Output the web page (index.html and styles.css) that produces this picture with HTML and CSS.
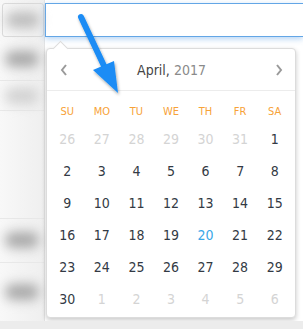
FILE: index.html
```html
<!DOCTYPE html>
<html lang="en">
<head>
    <meta charset="UTF-8">
    <title>Date Picker</title>
    <link rel="stylesheet" href="styles.css">
</head>
<body>
    <div class="page">
        <div class="side">
            <div class="side-btn"><span class="blob"></span></div>
            <div class="side-row"><span class="blob dark"></span></div>
            <div class="side-row short"><span class="blob light"></span></div>
            <div class="side-row tall"></div>
            <div class="side-row"><span class="blob dark"></span></div>
            <div class="side-row last"><span class="blob dark"></span></div>
        </div>
        <div class="main">
            <div class="field"></div>
            <div class="picker">
                <div class="picker-head">
                    <svg class="nav" width="8" height="12" viewBox="0 0 8 12"><polyline points="6,1 2,6 6,11" fill="none" stroke="#9a9a9a" stroke-width="2"/></svg>
                    <span class="title">April, <span class="year">2017</span></span>
                    <svg class="nav" width="8" height="12" viewBox="0 0 8 12"><polyline points="2,1 6,6 2,11" fill="none" stroke="#9a9a9a" stroke-width="2"/></svg>
                </div>
                <div class="days">
                    <div class="dow">SU</div><div class="dow">MO</div><div class="dow">TU</div><div class="dow">WE</div><div class="dow">TH</div><div class="dow">FR</div><div class="dow">SA</div>

                    <div class="day muted">26</div><div class="day muted">27</div><div class="day muted">28</div><div class="day muted">29</div><div class="day muted">30</div><div class="day muted">31</div><div class="day">1</div>
                    <div class="day">2</div><div class="day">3</div><div class="day">4</div><div class="day">5</div><div class="day">6</div><div class="day">7</div><div class="day">8</div>
                    <div class="day">9</div><div class="day">10</div><div class="day">11</div><div class="day">12</div><div class="day">13</div><div class="day">14</div><div class="day">15</div>
                    <div class="day">16</div><div class="day">17</div><div class="day">18</div><div class="day">19</div><div class="day today">20</div><div class="day">21</div><div class="day">22</div>
                    <div class="day">23</div><div class="day">24</div><div class="day">25</div><div class="day">26</div><div class="day">27</div><div class="day">28</div><div class="day">29</div>
                    <div class="day">30</div><div class="day muted">1</div><div class="day muted">2</div><div class="day muted">3</div><div class="day muted">4</div><div class="day muted">5</div><div class="day muted">6</div>
                </div>
            </div>
        </div>
    </div>
    <!-- annotation arrow drawn over the screenshot -->
    <svg class="pointer" width="303" height="329" viewBox="0 0 303 329">
        <defs>
            <filter id="shade" x="-20%" y="-20%" width="140%" height="140%">
                <feDropShadow dx="1" dy="2" stdDeviation="1.5" flood-color="#000" flood-opacity="0.35"/>
            </filter>
        </defs>
        <g filter="url(#shade)" fill="#1a8cf5">
            <line x1="81" y1="17" x2="105" y2="68" stroke="#1a8cf5" stroke-width="6" stroke-linecap="round"/>
            <polygon points="93,70 114,61 118,93"/>
        </g>
    </svg>
</body>
</html>
```

FILE: styles.css
```css
/* Global Styles */
body {
    margin: 0;
    font-family: 'DejaVu Sans Condensed', 'DejaVu Sans', sans-serif;
    background: #fff;
    color: #333;
}
.page {
    display: flex;
    width: 303px;
    height: 329px;
    overflow: hidden;
    border-bottom: 8px solid #ececec;
    box-sizing: border-box;
}
.side {
    width: 44px;
    display: flex;
    flex-direction: column;
    background: linear-gradient(to right, #f8f8f8, #efefef);
    border-right: 1px solid #e4e4e4;
}
.side-btn {
    height: 33px;
    margin: 3px 0 0 2px;
    border: 1px solid #dadada;
    border-radius: 3px;
    display: flex;
    align-items: center;
    justify-content: center;
}
.side-row {
    height: 45px;
    display: flex;
    align-items: center;
    justify-content: center;
    border-bottom: 1px solid #e8e8e8;
}
.side-row.short {
    height: 30px;
}
.side-row.tall {
    height: 110px;
}
.side-row.last {
    height: 60px;
    border-bottom: none;
}
.blob {
    width: 34px;
    height: 16px;
    border-radius: 8px;
    background: #bdbdbd;
    filter: blur(6px);
}
.blob.dark {
    background: #a9a9a9;
}
.blob.light {
    background: #d2d2d2;
}
.main {
    flex: 1;
    padding-top: 3px;
}
.field {
    height: 32px;
    border: 1px solid #63a6e6;
    border-right: none;
    background: #fff;
    box-shadow: 0 2px 6px rgba(90, 160, 230, 0.45);
}
.picker {
    position: relative;
    width: 250px;
    margin: 11px 0 0 1px;
    box-sizing: border-box;
    border: 1px solid #dcdcdc;
    border-radius: 4px;
    background: #fff;
    box-shadow: 0 2px 5px rgba(0, 0, 0, 0.22);
    padding: 0 3px 2px;
}
.picker::before {
    content: '';
    position: absolute;
    left: 8px;
    top: -6px;
    width: 10px;
    height: 10px;
    background: #fff;
    border-left: 1px solid #dcdcdc;
    border-top: 1px solid #dcdcdc;
    transform: rotate(45deg);
}
.picker-head {
    height: 41px;
    display: flex;
    align-items: center;
    justify-content: space-between;
    padding: 0 12px 0 13px;
    border-bottom: 1px solid #ececec;
    margin: 0 -3px;
}
.title {
    font-size: 14px;
    color: #444;
}
.year {
    color: #8a8a8a;
}
.days {
    display: grid;
    grid-template-columns: repeat(7, 1fr);
    grid-auto-rows: 32px;
}
.dow {
    height: 22px;
    padding-top: 10px;
    text-align: center;
    font-size: 11px;
    line-height: 22px;
    color: #f7a238;
}
.day {
    display: flex;
    align-items: center;
    justify-content: center;
    font-size: 14px;
    color: #333a44;
}
.day.muted {
    color: #d4d4d4;
}
.day.today {
    color: #3aa7e8;
}
.pointer {
    position: absolute;
    left: 0;
    top: 0;
    pointer-events: none;
}
```
